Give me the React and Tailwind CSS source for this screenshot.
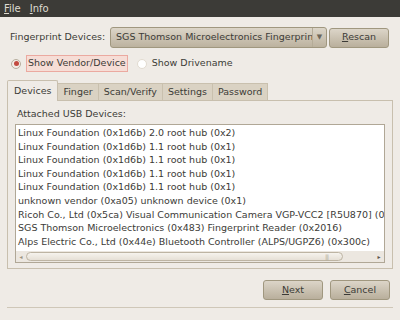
import React from "react";

const devices = [
  "Linux Foundation (0x1d6b) 2.0 root hub (0x2)",
  "Linux Foundation (0x1d6b) 1.1 root hub (0x1)",
  "Linux Foundation (0x1d6b) 1.1 root hub (0x1)",
  "Linux Foundation (0x1d6b) 1.1 root hub (0x1)",
  "Linux Foundation (0x1d6b) 1.1 root hub (0x1)",
  "unknown vendor (0xa05) unknown device (0x1)",
  "Ricoh Co., Ltd (0x5ca) Visual Communication Camera VGP-VCC2 [R5U870] (0x0)",
  "SGS Thomson Microelectronics (0x483) Fingerprint Reader (0x2016)",
  "Alps Electric Co., Ltd (0x44e) Bluetooth Controller (ALPS/UGPZ6) (0x300c)",
];

const tabs = ["Finger", "Scan/Verify", "Settings", "Password"];

function Button({ children, className = "" }) {
  return (
    <div
      className={`flex items-center justify-center h-[20px] rounded-[3px] border border-[#a0977f] bg-gradient-to-b from-[#dcd5c8] to-[#b9af9c] text-[#3c3b37] ${className}`}
    >
      {children}
    </div>
  );
}

export default function App() {
  return (
    <div
      className="w-[400px] h-[320px] flex flex-col bg-[#efebe6] text-[#3c3b37] text-[9.5px] overflow-hidden"
      style={{ fontFamily: '"DejaVu Sans", sans-serif' }}
    >
      {/* menubar */}
      <div className="h-[17px] bg-[#3c3b37] text-[#dfdbd2] text-[10px] flex items-center gap-[9px] pl-[4px]">
        <span>
          <u>F</u>ile
        </span>
        <span>
          <u>I</u>nfo
        </span>
      </div>

      {/* device selector */}
      <div className="flex items-center mt-[10px] pl-[10px] h-[21px]">
        <span className="w-[100px]">Fingerprint Devices:</span>
        <div className="flex items-center h-[21px] w-[217px] rounded-[3px] border border-[#a0977f] bg-gradient-to-b from-[#dcd5c8] to-[#bcb29f] overflow-hidden">
          <span className="flex-1 pl-[5px] whitespace-nowrap overflow-hidden">
            SGS Thomson Microelectronics Fingerprint Reader
          </span>
          <div className="w-[14px] h-full flex items-center justify-center border-l border-[#b5ac98] text-[7px] text-[#6d6659]">
            ▼
          </div>
        </div>
        <Button className="w-[60px] ml-[2px]">
          <span>
            <u>R</u>escan
          </span>
        </Button>
      </div>

      {/* radios */}
      <div className="flex items-center mt-[7px] pl-[11px] h-[17px]">
        <div className="w-[10px] h-[10px] rounded-full border border-[#b7ae9e] bg-[#f3ece6] flex items-center justify-center">
          <div className="w-[5px] h-[5px] rounded-full bg-[#c24a40]" />
        </div>
        <span className="ml-[5px] px-[1px] h-[17px] flex items-center border border-[#eba9a0] bg-[#f6ddd6]">
          Show Vendor/Device
        </span>
        <div className="ml-[9px] w-[10px] h-[10px] rounded-full border border-[#e2dbd0] bg-white" />
        <span className="ml-[5px]">Show Drivename</span>
      </div>

      {/* tabs */}
      <div className="flex items-end mt-[8px] pl-[7px] h-[20px]">
        <div className="h-[21px] px-[6px] flex items-center border border-b-0 border-[#c8bfae] rounded-t-[2px] bg-[#efebe6] relative top-[1px] z-10">
          Devices
        </div>
        {tabs.map((t) => (
          <div
            key={t}
            className="h-[17px] px-[5px] flex items-center border-t border-r border-[#c9c0ae] bg-[#dad2c3]"
          >
            {t}
          </div>
        ))}
      </div>

      {/* panel */}
      <div className="mx-[7px] h-[169px] border border-[#c8bfae] flex flex-col px-[7px]">
        <div className="mt-[7px] ml-[2px] h-[13px] flex items-center">Attached USB Devices:</div>
        <div className="mt-[3px] h-[139px] w-[370px] border border-[#b0a796] flex flex-col">
          <div className="h-[126px] bg-white overflow-hidden pt-[1px] pl-[2px]">
            {devices.map((d, i) => (
              <div key={i} className="h-[13.6px] leading-[13.6px] whitespace-nowrap">
                {d}
              </div>
            ))}
          </div>
          <div className="flex-1 flex items-center bg-[#ece7e0]">
            <span className="w-[10px] text-center text-[6px] text-[#9b937f]">◂</span>
            <div className="w-[317px] h-[9px] rounded-full border border-[#bdb4a3] bg-gradient-to-b from-[#f6f3ee] to-[#e6e0d6] flex items-center justify-end pr-[14px]">
              <span className="text-[6px] text-[#b5ac9c] tracking-[-1px]">|||</span>
            </div>
            <div className="flex-1" />
            <span className="w-[10px] text-center text-[6px] text-[#5c564b]">▸</span>
          </div>
        </div>
      </div>

      {/* buttons */}
      <div className="flex justify-end gap-[7px] mt-[11px] pr-[10px]">
        <Button className="w-[60px]">
          <span>
            <u>N</u>ext
          </span>
        </Button>
        <Button className="w-[60px]">
          <span>
            <u>C</u>ancel
          </span>
        </Button>
      </div>

      <div className="mx-[7px] mt-[7px] border-t border-[#cfc7b8]" />
    </div>
  );
}
